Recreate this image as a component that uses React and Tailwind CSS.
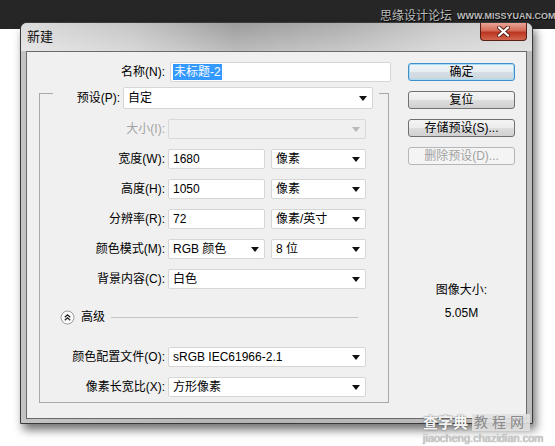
import React from "react";

const Arrow = ({ disabled }) => (
  <svg width="8" height="5" viewBox="0 0 8 5">
    <path d="M0 0h8L4 5z" fill={disabled ? "#b8b8b8" : "#111"} />
  </svg>
);

const Field = ({ value, className = "" }) => (
  <div
    className={`h-[20px] bg-white border border-[#d6d6d6] rounded-[2px] flex items-center pl-[4px] ${className}`}
  >
    {value}
  </div>
);

const Select = ({ value, className = "", disabled }) => (
  <div
    className={`h-[20px] border rounded-[2px] flex items-center justify-between pl-[4px] pr-[5px] ${
      disabled ? "bg-[#f0f0f0] border-[#d9d9d9]" : "bg-white border-[#d6d6d6]"
    } ${className}`}
  >
    <span>{value}</span>
    <Arrow disabled={disabled} />
  </div>
);

const Row = ({ label, disabled, children, className = "" }) => (
  <div className={`flex items-center h-[20px] ${className}`}>
    <div className={`w-[125px] text-right ${disabled ? "text-[#a3a3a3]" : ""}`}>
      {label}
    </div>
    <div className="ml-[3px] flex gap-[6px]">{children}</div>
  </div>
);

const Button = ({ children, variant }) => {
  const styles = {
    main: "border-[#3d8fc9] shadow-[inset_0_0_0_1px_#a8dcf5] bg-[linear-gradient(to_bottom,#f0f5f8,#e6edf2_50%,#d6dfe5_50%,#cbd5dc)]",
    normal: "border-[#707070] bg-[linear-gradient(to_bottom,#f4f4f4,#ececec_50%,#dedede_50%,#d0d0d0)]",
    disabled: "border-[#b3b7ba] bg-[#f4f4f4] text-[#a3a3a3]",
  };
  return (
    <div
      className={`h-[18px] rounded-[3px] border flex items-center justify-center ${styles[variant]}`}
    >
      {children}
    </div>
  );
};

export default function App() {
  return (
    <div className="relative w-[555px] h-[446px] overflow-hidden bg-[linear-gradient(to_bottom,#262626_0px,#262626_29px,#ffffff_29px)] pt-[22px] pl-[20px] font-['Liberation_Sans','Noto_Sans_CJK_SC',sans-serif] text-[12px] leading-[16px] text-black">
      {/* window */}
      <div className="w-[513px] h-[402px] rounded-t-[7px] border border-[#3a3a3a] bg-[linear-gradient(to_right,#c4c4c4,#b4b4b4_40%,#bdbdbd)] shadow-[3px_6px_10px_rgba(0,0,0,0.55)] flex flex-col">
        <div className="h-[28px] flex justify-between rounded-t-[6px] bg-[linear-gradient(to_bottom,rgba(255,255,255,0.05),rgba(255,255,255,0.35)),linear-gradient(to_right,#dadada,#c2c2c2_22%,#979797_42%,#a9a9a9_62%,#c6c6c6_82%,#d2d2d2)]">
          <div className="pl-[6px] self-center text-[13px] text-[#111]">新建</div>
          <div className="mr-[5px] w-[47px] h-[18px] rounded-b-[4px] border border-t-0 border-[#5a1f16] flex items-center justify-center bg-[linear-gradient(to_bottom,#e9a596,#d36a56_45%,#bb3620_55%,#d4644d)]">
            <svg width="13" height="11" viewBox="0 0 13 11">
              <path
                d="M2 1.5l9 8M11 1.5l-9 8"
                stroke="#5a2219"
                strokeWidth="4"
                strokeLinecap="round"
              />
              <path
                d="M2 1.5l9 8M11 1.5l-9 8"
                stroke="#ffffff"
                strokeWidth="2.2"
                strokeLinecap="round"
              />
            </svg>
          </div>
        </div>

        {/* client */}
        <div className="mx-[5px] h-[368px] border border-[#6a6a6a] bg-[#f0f0f0] flex">
          <div className="w-[364px] pt-[10px]">
            <div className="flex items-center h-[20px]">
              <div className="w-[138px] text-right">名称(N):</div>
              <div className="ml-[5px] w-[221px] h-[20px] bg-white border border-[#d6d6d6] rounded-[2px] flex items-center pl-[2px]">
                <span className="bg-[#3399ff] text-white px-[1px]">未标题-2</span>
              </div>
            </div>

            <div className="ml-[12px] mt-[5px] w-[350px]">
              <div className="flex items-start h-[22px]">
                <div className="w-[14px] h-[16px] mt-[6px] border-l border-t border-[#a9a9a9]" />
                <div className="w-[67px] text-right self-center">预设(P):</div>
                <div className="ml-[3px] w-[250px] h-[22px] bg-white border border-[#d6d6d6] rounded-[2px] flex items-center justify-between pl-[4px] pr-[5px]">
                  <span>自定</span>
                  <Arrow />
                </div>
                <div className="w-[6px]" />
                <div className="w-[10px] h-[16px] mt-[6px] border-r border-t border-[#a9a9a9]" />
              </div>

              <div className="border-l border-r border-b border-[#a9a9a9] pt-[10px] pb-[5px]">
                <div className="flex flex-col gap-[10px]">
                  <Row label="大小(I):" disabled>
                    <Select disabled value="" className="w-[198px]" />
                  </Row>
                  <Row label="宽度(W):">
                    <Field value="1680" className="w-[97px]" />
                    <Select value="像素" className="w-[95px]" />
                  </Row>
                  <Row label="高度(H):">
                    <Field value="1050" className="w-[97px]" />
                    <Select value="像素" className="w-[95px]" />
                  </Row>
                  <Row label="分辨率(R):">
                    <Field value="72" className="w-[97px]" />
                    <Select value="像素/英寸" className="w-[95px]" />
                  </Row>
                  <Row label="颜色模式(M):">
                    <Select value="RGB 颜色" className="w-[97px]" />
                    <Select value="8 位" className="w-[95px]" />
                  </Row>
                  <Row label="背景内容(C):">
                    <Select value="白色" className="w-[198px]" />
                  </Row>
                </div>

                <div className="mt-[20px] h-[16px] flex items-center pl-[20px]">
                  <svg width="15" height="15" viewBox="0 0 15 15">
                    <circle cx="7.5" cy="7.5" r="6.5" fill="#fbfbfb" stroke="#9a9a9a" />
                    <path d="M4.8 7.2L7.5 4.8L10.2 7.2M4.8 10.2L7.5 7.8L10.2 10.2" fill="none" stroke="#222" strokeWidth="1.3" />
                  </svg>
                  <span className="ml-[6px]">高级</span>
                  <div className="ml-[6px] w-[247px] h-0 border-t border-[#c4c4c4]" />
                </div>

                <div className="mt-[22px] flex flex-col gap-[10px]">
                  <Row label="颜色配置文件(O):">
                    <Select value="sRGB IEC61966-2.1" className="w-[198px]" />
                  </Row>
                  <Row label="像素长宽比(X):">
                    <Select value="方形像素" className="w-[198px]" />
                  </Row>
                </div>
              </div>
            </div>
          </div>

          <div className="ml-[17px] w-[107px] pt-[11px]">
            <div className="flex flex-col gap-[10px]">
              <Button variant="main">确定</Button>
              <Button variant="normal">复位</Button>
              <Button variant="normal">存储预设(S)...</Button>
              <Button variant="disabled">删除预设(D)...</Button>
            </div>
            <div className="mt-[117px] text-center">图像大小:</div>
            <div className="mt-[7px] text-center">5.05M</div>
          </div>
        </div>
      </div>

      {/* watermarks */}
      <div className="absolute left-[380px] top-[8px] flex items-center gap-[5px] whitespace-nowrap">
        <span className="text-[12px] leading-[16px] text-[#bcbcbc] [text-shadow:1px_1px_0_#000]">思缘设计论坛</span>
        <span className="text-[9px] leading-[12px] font-bold text-[#bcbcbc] [text-shadow:1px_1px_0_#000]">WWW.MISSYUAN.COM</span>
      </div>
      <div className="absolute left-[423px] top-[414px] flex flex-col whitespace-nowrap">
        <div className="flex items-center">
          <span className="text-[15px] leading-[17px] font-bold text-[#f4f4f4] [text-shadow:0_0_2px_#555]">查字典</span>
          <span className="ml-[4px] px-[2px] bg-[rgba(225,225,225,0.9)] text-[14px] leading-[17px] tracking-[4px] text-[#8a8a8a]">教程网</span>
        </div>
        <span className="mt-[1px] text-[11px] leading-[12px] text-[#d4d4d4] [text-shadow:0_0_1px_#666]">jiaocheng.chazidian.com</span>
      </div>
    </div>
  );
}
